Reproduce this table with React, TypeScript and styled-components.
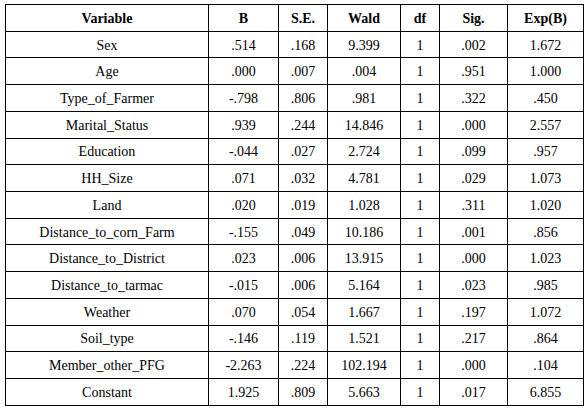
import React from "react";
import styled, { createGlobalStyle } from "styled-components";

const Global = createGlobalStyle`
  html, body { margin: 0; padding: 0; background: #ffffff; }
  body { font-family: "Liberation Serif", "Times New Roman", serif; }
`;

const Page = styled.div`
  padding: 4px 0 0 5px;
`;

const Table = styled.table`
  border-collapse: collapse;
  table-layout: fixed;
  width: 579px;
  color: #000;
`;

const Row = styled.tr`
  height: 26.73px;
`;

const Head = styled.th`
  border: 1px solid #000;
  font-family: "Liberation Serif", "Times New Roman", serif;
  font-size: 14px;
  font-weight: bold;
  text-align: center;
  vertical-align: middle;
  padding: 2px 0 0;
`;

const Cell = styled.td`
  border: 1px solid #000;
  font-family: "Liberation Serif", "Times New Roman", serif;
  font-size: 14px;
  text-align: center;
  vertical-align: middle;
  padding: 2px 0 0;
`;

const widths = [203, 70, 49, 73, 39, 68, 76];
const headers = ["Variable", "B", "S.E.", "Wald", "df", "Sig.", "Exp(B)"];
const rows: string[][] = [
  ["Sex", ".514", ".168", "9.399", "1", ".002", "1.672"],
  ["Age", ".000", ".007", ".004", "1", ".951", "1.000"],
  ["Type_of_Farmer", "-.798", ".806", ".981", "1", ".322", ".450"],
  ["Marital_Status", ".939", ".244", "14.846", "1", ".000", "2.557"],
  ["Education", "-.044", ".027", "2.724", "1", ".099", ".957"],
  ["HH_Size", ".071", ".032", "4.781", "1", ".029", "1.073"],
  ["Land", ".020", ".019", "1.028", "1", ".311", "1.020"],
  ["Distance_to_corn_Farm", "-.155", ".049", "10.186", "1", ".001", ".856"],
  ["Distance_to_District", ".023", ".006", "13.915", "1", ".000", "1.023"],
  ["Distance_to_tarmac", "-.015", ".006", "5.164", "1", ".023", ".985"],
  ["Weather", ".070", ".054", "1.667", "1", ".197", "1.072"],
  ["Soil_type", "-.146", ".119", "1.521", "1", ".217", ".864"],
  ["Member_other_PFG", "-2.263", ".224", "102.194", "1", ".000", ".104"],
  ["Constant", "1.925", ".809", "5.663", "1", ".017", "6.855"],
];

export default function App() {
  return (
    <Page>
      <Global />
      <Table>
        <colgroup>
          {widths.map((w, i) => (
            <col key={i} style={{ width: w }} />
          ))}
        </colgroup>
        <thead>
          <Row>
            {headers.map((h) => (
              <Head key={h}>{h}</Head>
            ))}
          </Row>
        </thead>
        <tbody>
          {rows.map((r) => (
            <Row key={r[0]}>
              {r.map((c, i) => (
                <Cell key={i}>{c}</Cell>
              ))}
            </Row>
          ))}
        </tbody>
      </Table>
    </Page>
  );
}
